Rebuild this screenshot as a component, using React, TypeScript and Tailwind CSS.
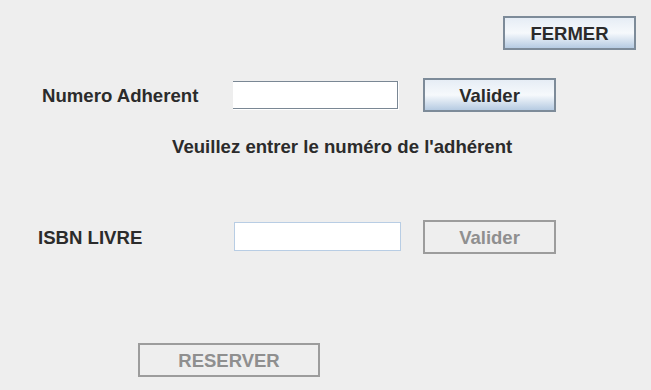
import React from "react";

const ActiveButton: React.FC<{ label: string; width: string }> = ({ label, width }) => {
    return (
        <button className={`${width} h-[34px] pt-[2px] border-2 border-[#7d8b99] bg-gradient-to-b from-[#e6edf5] via-[#f6f9fc] to-[#b6cbe2] text-[18.5px] font-bold text-[#2b2b2b]`}>
            {label}
        </button>
    );
};

const DisabledButton: React.FC<{ label: string; width: string }> = ({ label, width }) => {
    return (
        <button disabled className={`${width} h-[34px] pt-[2px] border-2 border-[#9c9c9c] bg-[#eeeeee] text-[18.5px] font-bold text-[#8f8f8f]`}>
            {label}
        </button>
    );
};

export default function App() {
    return (
        <div className="w-[651px] h-[390px] overflow-hidden bg-[#eeeeee] font-['Liberation_Sans',Arial,sans-serif] text-[#2b2b2b]">
            {/* Fermer */}
            <div className="flex justify-end pt-[16px] pr-[15px]">
                <ActiveButton label="FERMER" width="w-[133px]" />
            </div>

            {/* Numero adherent */}
            <div className="flex items-center mt-[28px] h-[34px]">
                <div className="w-[233px] pl-[42px] pt-[2px] text-[18.6px] font-bold">Numero Adherent</div>
                <div className="w-[166px] h-[29px] bg-white pr-[1px] pb-[1px]">
                    <div className="h-full border-t border-r border-b border-[#7a8794] bg-white"></div>
                </div>
                <div className="ml-[24px]">
                    <ActiveButton label="Valider" width="w-[133px]" />
                </div>
            </div>

            <div className="mt-[24px] pl-[172px] text-[18.6px] font-bold leading-[22px]">
                Veuillez entrer le numéro de l'adhérent
            </div>

            {/* ISBN */}
            <div className="flex items-center mt-[62px] h-[34px]">
                <div className="w-[234px] pl-[38px] pt-[2px] text-[18.6px] font-bold">ISBN LIVRE</div>
                <div className="w-[167px] h-[29px] -mt-[2px] border border-[#b8cde4] bg-white"></div>
                <div className="ml-[22px]">
                    <DisabledButton label="Valider" width="w-[133px]" />
                </div>
            </div>

            <div className="mt-[89px] pl-[138px]">
                <DisabledButton label="RESERVER" width="w-[182px]" />
            </div>
        </div>
    );
}
